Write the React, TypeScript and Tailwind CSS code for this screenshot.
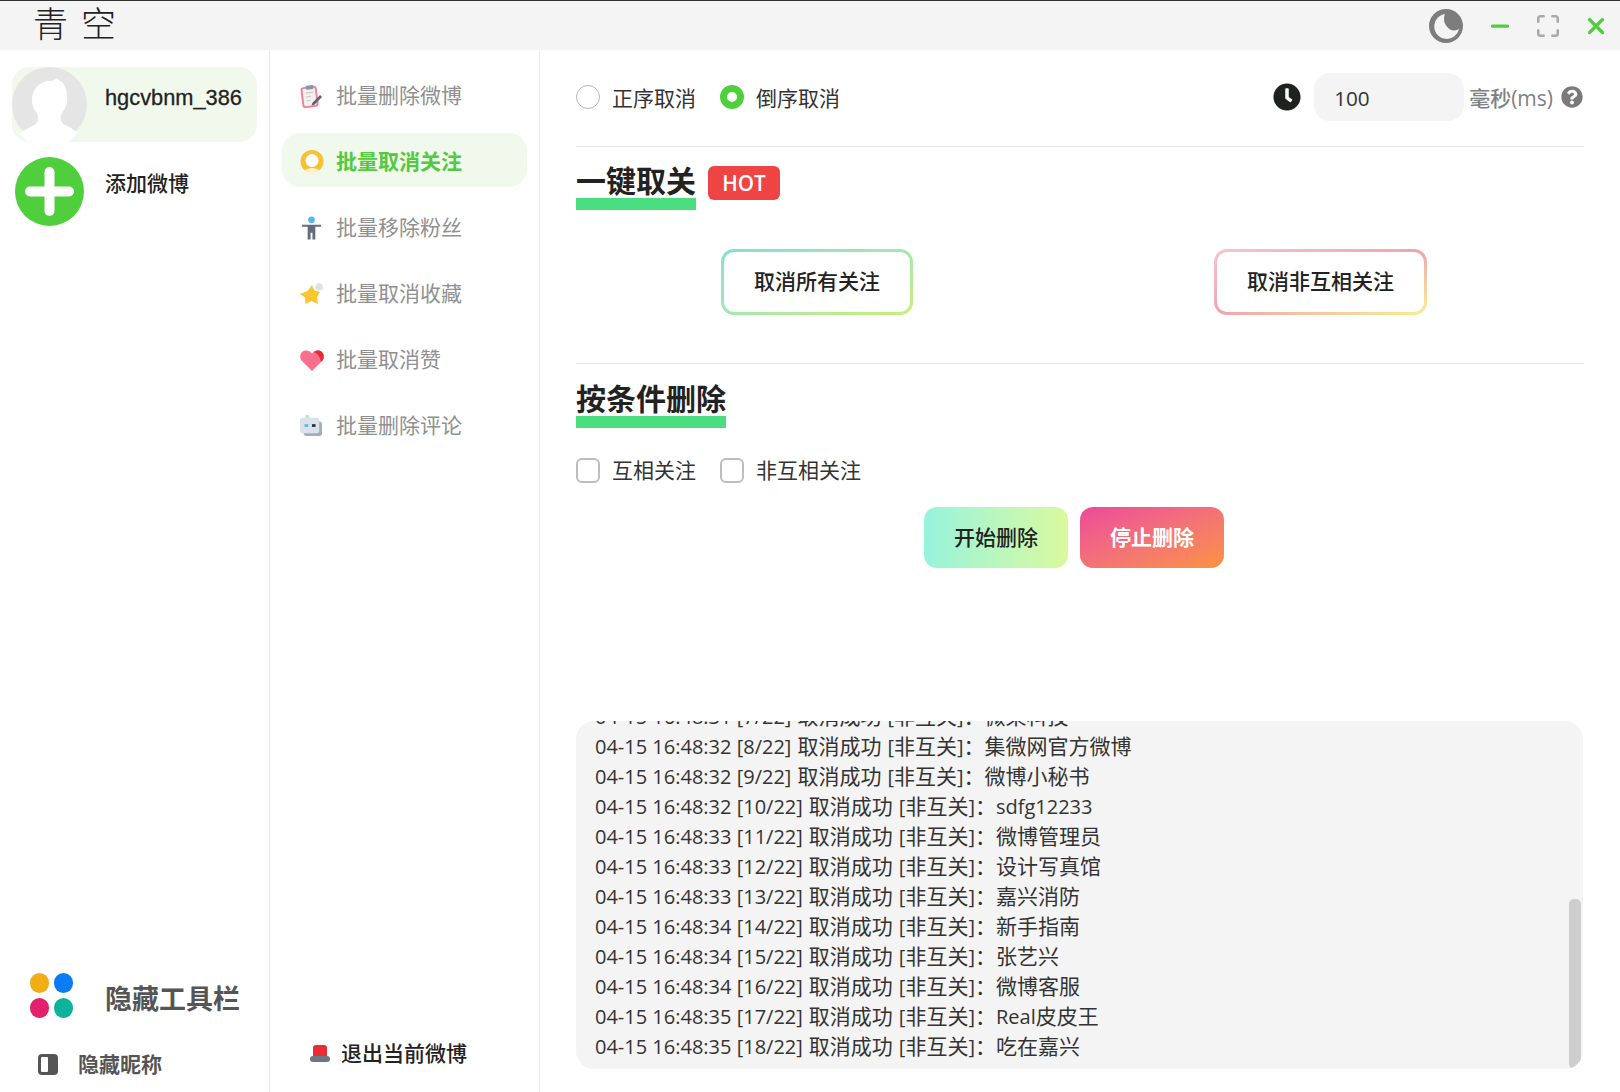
import { Maximize, Minus, X } from "lucide-react";
import { FaClock, FaQuestionCircle } from "react-icons/fa";

const CJK = "font-['Open_Sans','Noto_Sans_CJK_SC',sans-serif]";

function Avatar() {
  return (
    <svg viewBox="0 0 75 75" className="w-[75px] h-[75px] shrink-0">
      <circle cx="37.5" cy="37.5" r="37.5" fill="#e5e5e5" />
      <path
        d="M20 36c-1-13 7-22 18-22 3 0 5-1 7-3 1 2 3 3 5 4 4 4 6 12 5 20-1 5-3 8-5 11-2 4-2 9 3 12 6 3 10 5 13 8a37 37 0 0 1-58 1c4-4 9-6 14-9 5-3 5-8 3-12-3-3-4-6-5-10z"
        fill="#fff"
      />
    </svg>
  );
}

function ClipboardIcon() {
  return (
    <svg viewBox="0 0 24 24" className="w-[23px] h-[24px]">
      <rect x="2.5" y="3" width="15" height="20" rx="2" transform="rotate(-7 10 13)" fill="#f5f0ee" stroke="#ee7f98" strokeWidth="2" />
      <rect x="6" y="1" width="8" height="4" rx="1" transform="rotate(-7 10 3)" fill="#8d95a5" />
      <path d="M6 9l8-1M6.5 13l5-.6M7 17l4-.5" stroke="#c9cdd3" strokeWidth="1.4" />
      <path d="M13 19l8-8 2 2-8 8-3 1z" fill="#5d6371" />
    </svg>
  );
}

function RingIcon() {
  return (
    <svg viewBox="0 0 24 24" className="w-[24px] h-[24px]">
      <circle cx="12" cy="11.500" r="11.500" fill="#f6c233" />
      <circle cx="12" cy="10.500" r="6.500" fill="#fff" />
      <path d="M4 21c4-4 12-4 16 0l-3 3H7z" fill="#fdf3d0" />
    </svg>
  );
}

function PersonIcon() {
  return (
    <svg viewBox="0 0 24 24" className="w-[23px] h-[24px]">
      <circle cx="12" cy="3.5" r="3.5" fill="#58b7e8" />
      <path d="M2 8.5h20v2.2h-6V24h-3v-7h-2v7H8V10.7H2z" fill="#646b7b" />
    </svg>
  );
}

function StarIcon() {
  return (
    <svg viewBox="0 0 24 24" className="w-[24px] h-[24px]">
      <path d="M17 1l5 1 1 5-4 2-4-3z" fill="#dfe2e8" />
      <path d="M12 3l2.500 5.500 5.500 1.500-3 5 1 7-6.500-3-6 3-.5-6.500L0 12l7.500-3z" fill="#f8c62f" />
    </svg>
  );
}

function HeartIcon() {
  return (
    <svg viewBox="0 0 24 22" className="w-[24px] h-[22px]">
      <path d="M12 22L1.500 11.500C-1.500 7 1 1.500 6 1.500c3 0 5 1.500 6 3 1-1.500 3-3 6-3 5 0 7.500 5.500 4.500 10z" fill="#fb6f8e" />
      <path d="M14 3c1-1 2.500-1.500 4-1.500 5 0 7.500 5.500 4.500 10l-1.500 1.500C20 8.500 18 4.500 14 3z" fill="#ea2b34" />
    </svg>
  );
}

function BotIcon() {
  return (
    <svg viewBox="0 0 24 24" className="w-[22px] h-[22px]">
      <rect x="6" y="0" width="4" height="5" rx="1" fill="#cfd5df" />
      <rect x="4" y="7" width="20" height="16" rx="3" fill="#a6adbb" />
      <rect x="0" y="3" width="21" height="17" rx="3" fill="#dbe2ec" />
      <rect x="5" y="10" width="4" height="3" fill="#5db6e6" />
      <rect x="13" y="10" width="4" height="3" fill="#2a3240" />
    </svg>
  );
}

function MoonIcon() {
  return (
    <svg viewBox="0 0 34 34" className="w-[34px] h-[34px]">
      <circle cx="17" cy="17" r="17" fill="#7d7d7d" />
      <path d="M16 5a12.5 12.5 0 1 0 14 15c-2 1-4 1.500-6 1.500A12 12 0 0 1 16 5z" fill="#f4f4f4" />
    </svg>
  );
}

function PlusCircle() {
  return (
    <svg viewBox="0 0 69 69" className="w-[69px] h-[69px] shrink-0">
      <circle cx="34.500" cy="34.500" r="34.500" fill="#4fcf3c" />
      <path d="M34.500 15v39M15 34.500h39" stroke="#fff" strokeWidth="10" strokeLinecap="round" />
    </svg>
  );
}

function Dots() {
  return (
    <div className="grid grid-cols-2 gap-x-[5px] gap-y-[5px] w-[43px] shrink-0 mb-[5px]">
      <div className="w-[19px] h-[20px] rounded-full bg-[#f0ad16]" />
      <div className="w-[19px] h-[20px] rounded-full bg-[#0a7cf5]" />
      <div className="w-[19px] h-[20px] rounded-full bg-[#e2206b]" />
      <div className="w-[19px] h-[20px] rounded-full bg-[#0fb39c]" />
    </div>
  );
}

function Heading({ children }: { children: string }) {
  return (
    <h2 className="text-[30px] leading-[30px] pb-[2px] font-bold text-[#222] border-b-[12px] border-[#4ade80] whitespace-nowrap">
      {children}
    </h2>
  );
}

function Radio({ checked, label }: { checked?: boolean; label: string }) {
  return (
    <label className="flex items-center gap-3 text-[#333]">
      {checked ? (
        <span className="w-6 h-6 rounded-full border-[7px] border-[#4fcf3c] bg-white" />
      ) : (
        <span className="w-6 h-6 rounded-full border border-[#b5b5b5] bg-white" />
      )}
      <span className="pt-[4px]">{label}</span>
    </label>
  );
}

function Check({ label }: { label: string }) {
  return (
    <label className="flex items-center gap-3 text-[#333]">
      <span className="w-6 h-[25px] rounded-[6px] border-2 border-[#bdbdbd] bg-white" />
      <span className="pt-[2px]">{label}</span>
    </label>
  );
}

// latin runs sit a bit smaller than the CJK ones in the log
function Mixed({ text }: { text: string }) {
  return (
    <>
      {text.split(/([\u4e00-\u9fff：]+)/).map((part, i) =>
        i % 2 === 1 ? (
          <span key={i} className="text-[21px]">{part}</span>
        ) : (
          <span key={i}>{part}</span>
        )
      )}
    </>
  );
}

const menu = [
  { label: "批量删除微博", icon: <ClipboardIcon /> },
  { label: "批量取消关注", icon: <RingIcon />, active: true },
  { label: "批量移除粉丝", icon: <PersonIcon /> },
  { label: "批量取消收藏", icon: <StarIcon /> },
  { label: "批量取消赞", icon: <HeartIcon /> },
  { label: "批量删除评论", icon: <BotIcon /> },
];

const logs = [
  ["04-15 16:48:31 [7/22]", "微果科技"],
  ["04-15 16:48:32 [8/22]", "集微网官方微博"],
  ["04-15 16:48:32 [9/22]", "微博小秘书"],
  ["04-15 16:48:32 [10/22]", "sdfg12233"],
  ["04-15 16:48:33 [11/22]", "微博管理员"],
  ["04-15 16:48:33 [12/22]", "设计写真馆"],
  ["04-15 16:48:33 [13/22]", "嘉兴消防"],
  ["04-15 16:48:34 [14/22]", "新手指南"],
  ["04-15 16:48:34 [15/22]", "张艺兴"],
  ["04-15 16:48:34 [16/22]", "微博客服"],
  ["04-15 16:48:35 [17/22]", "Real皮皮王"],
  ["04-15 16:48:35 [18/22]", "吃在嘉兴"],
];

export default function App() {
  return (
    <div className={`w-[1620px] h-[1092px] flex flex-col overflow-hidden bg-white text-[21px] ${CJK}`}>
      {/* Title bar */}
      <header className="h-[50px] shrink-0 border-t border-[#333] bg-[#f4f4f4] flex items-center pl-[33px]">
        <div className="text-[35px] leading-none font-light tracking-[13px] text-[#222] flex-1 mb-[9px] font-['Noto_Sans_CJK_SC',sans-serif]">青空</div>
        <MoonIcon />
        <Minus className="w-[26px] h-[26px] ml-[24px] text-[#4fcf3c]" strokeWidth={3} />
        <Maximize className="w-[26px] h-[26px] ml-[22px] text-[#a9a9a9]" strokeWidth={2.4} />
        <X className="w-[26px] h-[26px] ml-[22px] mr-[11px] text-[#4fcf3c]" strokeWidth={3} />
      </header>

      <div className="flex flex-1 min-h-0">
        {/* Accounts */}
        <aside className="w-[270px] shrink-0 border-r border-[#e8e8e8] flex flex-col">
          <div className="mt-[17px] ml-[12px] w-[245px] h-[75px] rounded-[18px] bg-[#f0f9ec] flex">
            <Avatar />
            <span className="ml-[18px] mt-[14px] h-[34px] leading-[34px] text-[21.8px] text-[#222] font-['Liberation_Sans',sans-serif] [-webkit-text-stroke:0.3px_#222]">
              hgcvbnm_386
            </span>
          </div>
          <div className="mt-[15px] ml-[15px] flex">
            <PlusCircle />
            <span className="ml-[21px] mt-[8px] text-[21px] font-medium text-[#222] leading-[34px] font-['Noto_Sans_CJK_SC',sans-serif]">添加微博</span>
          </div>
          <div className="mt-auto ml-[30px] flex items-center">
            <Dots />
            <span className="ml-[32px] text-[27px] font-bold text-[#555] leading-[45px]">隐藏工具栏</span>
          </div>
          <div className="mt-[28px] mb-[15px] ml-[38px] flex items-center">
            <div className="w-[20px] h-[21px] rounded-[4px] bg-[#555] p-[3px] pr-[10px]">
              <div className="w-full h-full bg-white rounded-[1px]" />
            </div>
            <span className="ml-[20px] font-semibold text-[#555] leading-[26px]">隐藏昵称</span>
          </div>
        </aside>

        {/* Menu */}
        <nav className="w-[270px] shrink-0 border-r border-[#e8e8e8] flex flex-col">
          <div className="mt-[17px] flex flex-col gap-[12px] px-[12px]">
            {menu.map((m) => (
              <div
                key={m.label}
                className={`h-[54px] w-[245px] rounded-[18px] flex items-center pt-[4px] ${m.active ? "bg-[#f0f9ec]" : ""}`}
              >
                <span className="w-[54px] pl-[18px] flex items-center">{m.icon}</span>
                <span className={m.active ? "font-bold text-[#52c93f]" : "text-[#909090]"}>{m.label}</span>
              </div>
            ))}
          </div>
          <div className="mt-auto mb-[23px] ml-[40px] flex items-center">
            <svg viewBox="0 0 20 17" className="w-[20px] h-[17px]">
              <path d="M3 11V3a3 3 0 0 1 3-3h8a3 3 0 0 1 3 3v8z" fill="#ea2b2f" />
              <rect x="0" y="11" width="20" height="6" rx="3" fill="#6d7484" />
            </svg>
            <span className="ml-[11px] font-medium text-[#222]">退出当前微博</span>
          </div>
        </nav>

        {/* Content */}
        <main className="flex-1 min-w-0 px-[36px] flex flex-col">
          <div className="mt-[23px] h-[48px] flex items-center">
            <div className="flex gap-6">
              <Radio label="正序取消" />
              <Radio checked label="倒序取消" />
            </div>
            <FaClock className="ml-auto w-[28px] h-[28px] text-[#1f2320]" />
            <div className="ml-[13px] w-[150px] h-[48px] rounded-[16px] bg-[#f4f4f4] flex items-center pl-[20px] pt-[4px] text-[#333] text-[20.7px]">100</div>
            <span className="ml-[5px] text-[#808080] pt-[4px]">
              <span className="font-medium">毫秒</span>(ms)
            </span>
            <FaQuestionCircle className="ml-[8px] mr-[1px] w-[22px] h-[22px] text-[#7a7a7a]" />
          </div>
          <div className="mt-[25px] border-t border-[#e5e5e5]" />

          <div className="mt-[19px] flex items-start gap-3">
            <Heading>一键取关</Heading>
            <span className="w-[72px] h-[34px] rounded-[6px] bg-[#ef4444] text-white flex items-center justify-center pt-[2px] font-semibold text-[20.700px]">HOT</span>
          </div>
          <div className="mt-[39px] ml-[145px] flex gap-[301px]">
            <div className="w-[192px] h-[66px] rounded-[13px] p-[3px] bg-gradient-to-br from-[#7fdfd8] to-[#c9ee78]">
              <div className="w-full h-full rounded-[10px] bg-white flex items-center justify-center font-medium text-[#222]">取消所有关注</div>
            </div>
            <div className="w-[213px] h-[66px] rounded-[13px] p-[3px] bg-gradient-to-br from-[#f5c6cb] via-[#eda6ae] to-[#fbee8e]">
              <div className="w-full h-full rounded-[10px] bg-white flex items-center justify-center font-medium text-[#222]">取消非互相关注</div>
            </div>
          </div>
          <div className="mt-[48px] border-t border-[#e5e5e5]" />

          <div className="mt-[20px] flex">
            <Heading>按条件删除</Heading>
          </div>
          <div className="mt-[29px] flex gap-6 h-[26px]">
            <Check label="互相关注" />
            <Check label="非互相关注" />
          </div>
          <div className="mt-[24px] ml-[348px] flex gap-[12px]">
            <div className="w-[144px] h-[61px] rounded-[13px] bg-gradient-to-r from-[#96f3dc] to-[#d9f99d] flex items-center justify-center font-medium text-[#222]">开始删除</div>
            <div className="w-[144px] h-[61px] rounded-[13px] bg-gradient-to-br from-[#ec4899] to-[#fb923c] flex items-center justify-center font-bold text-white">停止删除</div>
          </div>

          <div className="relative mt-auto mb-[23px] mr-[1px] h-[348px] rounded-[18px] bg-[#f4f4f4] overflow-hidden flex flex-col justify-end pl-[19px] pb-[8px] text-[#333] text-[20px]">
            {logs.map(([head, name]) => (
              <div key={head} className="h-[30px] shrink-0 leading-[30px] whitespace-pre">
                {head}
                <span className="mx-[6px] text-[21px]">取消成功</span>
                [<span className="text-[21px]">非互关</span>]<span className="text-[21px]">：</span>
                <Mixed text={name} />
              </div>
            ))}
            <div className="absolute right-[2px] top-[178px] bottom-0 w-[12px] rounded-[5px] bg-[#cecece]" />
          </div>
        </main>
      </div>
    </div>
  );
}
